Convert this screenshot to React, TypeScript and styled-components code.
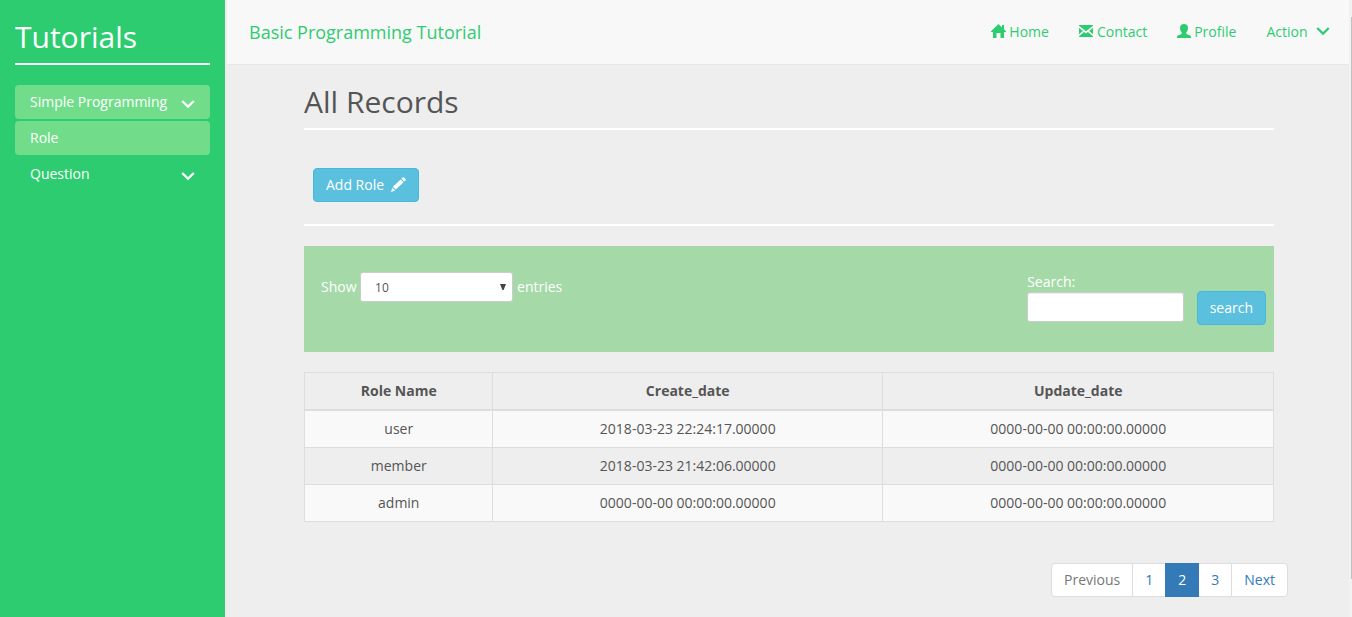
import React from "react";
import styled, { createGlobalStyle } from "styled-components";

const GlobalStyle = createGlobalStyle`
  * { box-sizing: border-box; }
  body {
    margin: 0;
    background: #eee;
    color: #555;
    font: 14px/20px "Open Sans", sans-serif;
    overflow: hidden;
  }
  a { color: inherit; text-decoration: none; }
`;

const Page = styled.div`
  display: flex;
  height: 617px;
`;

const Sidebar = styled.aside`
  width: 225px;
  flex: none;
  padding: 0 15px;
  background: #2ecc71;
  color: #fff;
`;

const Brand = styled.h2`
  margin: 0 0 20px;
  height: 65px;
  padding-top: 20px;
  border-bottom: 2px solid #fff;
  font-size: 30px;
  font-weight: 400;
  line-height: 33px;
`;

const Menu = styled.nav`
  display: flex;
  flex-direction: column;
  gap: 2px;
`;

const MenuItem = styled.a<{ $active?: boolean }>`
  display: flex;
  align-items: center;
  justify-content: space-between;
  height: 34px;
  padding: 0 15px;
  border-radius: 4px;
  background: ${(p) => (p.$active ? "#71dd8a" : "transparent")};

  svg { margin-top: 3px; }
`;

const Main = styled.div`
  flex: 1;
  min-width: 0;
  margin-left: 2px;
`;

const TopBar = styled.header`
  display: flex;
  align-items: center;
  justify-content: space-between;
  height: 65px;
  padding: 0 19.500px 0 22px;
  background: #f8f8f8;
  border-bottom: 1px solid #e7e7e7;
  color: #2ecc71;
`;

const SiteName = styled.a`
  font-size: 18px;
`;

const Links = styled.nav`
  display: flex;
  gap: 30px;
`;

const TopLink = styled.a<{ $gap?: number }>`
  display: flex;
  align-items: center;
  gap: ${(p) => p.$gap ?? 3}px;

  svg { margin-top: -2px; }
`;

const Content = styled.main`
  width: 970px;
  margin-left: 77px;
`;

const PageTitle = styled.h2`
  margin: 0;
  height: 65px;
  padding-top: 20px;
  border-bottom: 2px solid #fff;
  font-size: 30px;
  font-weight: 400;
  line-height: 33px;
`;

const Actions = styled.div`
  height: 96px;
  padding: 38px 9px 0;
  border-bottom: 2px solid #fff;
`;

const Button = styled.button`
  display: inline-flex;
  align-items: center;
  gap: 7px;
  height: 34px;
  padding: 0 12px;
  border: 1px solid #46b8da;
  border-radius: 4px;
  background: #5bc0de;
  color: #fff;
  font: inherit;

  svg { margin-top: -2px; }
`;

const Filters = styled.section`
  display: flex;
  justify-content: space-between;
  height: 106px;
  margin: 20px 0;
  padding: 26px 8px 0 17px;
  background: #a5daa8;
  color: #fff;
`;

const Entries = styled.div`
  display: flex;
  align-items: center;
  gap: 4.500px;
  height: 30px;
`;

const SelectBox = styled.div`
  display: flex;
  align-items: center;
  justify-content: space-between;
  width: 153px;
  height: 30px;
  margin-left: -1.500px;
  padding: 1px 6px 0 14.500px;
  border: 1px solid #ccc;
  border-radius: 3px;
  background: #fff;
  color: #555;
  font-size: 12px;

  svg { margin-top: -2px; }
`;

const SearchForm = styled.div`
  display: flex;
  gap: 13px;

  button { margin-top: 19px; }
`;

const SearchLabel = styled.label`
  display: flex;
  flex-direction: column;
  text-indent: 0.500px;
`;

const SearchInput = styled.input`
  width: 157px;
  height: 30px;
  border: 1px solid #ccc;
  border-radius: 3px;
  background: #fff;
  box-shadow: inset 0 1px 1px rgba(0, 0, 0, 0.075);
`;

const Table = styled.table`
  width: 970px;
  table-layout: fixed;
  border-collapse: collapse;
  text-align: center;

  th, td {
    height: 37px;
    padding: 0 0 0 0.500px;
    border: 1px solid #ddd;
  }
  th { border-bottom-width: 2px; font-weight: 700; }
  tbody tr:first-child td { height: 38px; padding-top: 1px; }
  tbody tr:nth-child(odd) { background: #f9f9f9; }
`;

const Pager = styled.nav`
  display: flex;
  justify-content: flex-end;
  margin: 41px -14px 0 0;
`;

const PageLink = styled.a<{ $kind?: "disabled" | "active" }>`
  height: 34px;
  margin-left: -1px;
  padding: 6px 12px;
  position: relative;
  z-index: ${(p) => (p.$kind === "active" ? 1 : 0)};
  border: 1px solid ${(p) => (p.$kind === "active" ? "#337ab7" : "#ddd")};
  background: ${(p) => (p.$kind === "active" ? "#337ab7" : "#fff")};
  color: ${(p) =>
    p.$kind === "active" ? "#fff" : p.$kind === "disabled" ? "#777" : "#337ab7"};

  &:first-child { border-radius: 4px 0 0 4px; }
  &:last-child { border-radius: 0 4px 4px 0; }
`;

const ScrollTrack = styled.div`
  width: 3px;
  flex: none;
  padding: 17px 0 0 2px;
  background: #f1f1f1;
`;

const ScrollThumb = styled.div`
  height: 562px;
  background: #c1c1c1;
`;

const ChevronDown = () => (
  <svg width="14" height="14" viewBox="0 0 14 14">
    <path d="M1.200 4 7 9.600 12.800 4" fill="none" stroke="currentColor" strokeWidth="2.2" />
  </svg>
);

const HomeIcon = () => (
  <svg width="15" height="14" viewBox="0 0 15 14">
    <path
      d="M7.500 0 11 3.400V1h2v4.300L15 7.300V8h-2v6H9.500V9h-4v5H2V8H0v-.7z"
      fill="currentColor"
    />
  </svg>
);

const EnvelopeIcon = () => (
  <svg width="15" height="14" viewBox="0 0 15 14">
    <path
      d="M0 1h14v.8L7 7.300 0 1.800zM0 3.700 3.900 7 0 10.300zM14 3.700v6.600L10.100 7zM5.100 8 7 9.500 8.900 8 14 12.200v.8H0v-.8z"
      fill="currentColor"
    />
  </svg>
);

const UserIcon = () => (
  <svg width="14" height="14" viewBox="0 0 14 14">
    <path
      d="M7 0C9.400 0 11 1.400 11 3.700c0 1.800-.5 3.500-1.700 4.700v.9c0 .5.2.7.6.9l3.300 1.400c.5.2.8.6.8 1.100V14H0v-1.300c0-.5.3-.9.8-1.100l3.300-1.400c.4-.2.6-.4.6-.9v-.9C3.500 7.200 3 5.500 3 3.700 3 1.400 4.600 0 7 0z"
      fill="currentColor"
    />
  </svg>
);

const PencilIcon = () => (
  <svg width="15" height="15" viewBox="0 0 15 15">
    <path
      d="M11.600.6c.4-.4 1-.4 1.400 0l1.500 1.500c.4.4.4 1 0 1.400l-1.200 1.100-2.900-2.900zM9.700 2.400l2.900 2.900-7.900 7.300-2.800-2.800zM1.300 10.700l2.900 2.900L0 15z"
      fill="currentColor"
    />
  </svg>
);

const SelectArrow = () => (
  <svg width="6" height="6" viewBox="0 0 6 6">
    <path d="M0 0h6L3.600 6H2.400z" fill="#444" />
  </svg>
);

const columns = ["Role Name", "Create_date", "Update_date"];
const rows = [
  ["user", "2018-03-23 22:24:17.00000", "0000-00-00 00:00:00.00000"],
  ["member", "2018-03-23 21:42:06.00000", "0000-00-00 00:00:00.00000"],
  ["admin", "0000-00-00 00:00:00.00000", "0000-00-00 00:00:00.00000"],
];

export default function App() {
  return (
    <>
      <GlobalStyle />
      <Page>
        <Sidebar>
          <Brand>Tutorials</Brand>
          <Menu>
            <MenuItem $active>Simple Programming <ChevronDown /></MenuItem>
            <MenuItem $active>Role</MenuItem>
            <MenuItem>Question <ChevronDown /></MenuItem>
          </Menu>
        </Sidebar>
        <Main>
          <TopBar>
            <SiteName>Basic Programming Tutorial</SiteName>
            <Links>
              <TopLink><HomeIcon />Home</TopLink>
              <TopLink><EnvelopeIcon />Contact</TopLink>
              <TopLink><UserIcon />Profile</TopLink>
              <TopLink $gap={8}>Action<ChevronDown /></TopLink>
            </Links>
          </TopBar>
          <Content>
            <PageTitle>All Records</PageTitle>
            <Actions>
              <Button>Add Role <PencilIcon /></Button>
            </Actions>
            <Filters>
              <Entries>
                Show
                <SelectBox>10<SelectArrow /></SelectBox>
                entries
              </Entries>
              <SearchForm>
                <SearchLabel>Search:<SearchInput /></SearchLabel>
                <Button>search</Button>
              </SearchForm>
            </Filters>
            <Table>
              <colgroup>
                <col style={{ width: 188 }} />
                <col style={{ width: 390 }} />
                <col style={{ width: 391 }} />
              </colgroup>
              <thead>
                <tr>{columns.map((c) => <th key={c}>{c}</th>)}</tr>
              </thead>
              <tbody>
                {rows.map((row) => (
                  <tr key={row[0]}>{row.map((cell, i) => <td key={i}>{cell}</td>)}</tr>
                ))}
              </tbody>
            </Table>
            <Pager>
              <PageLink $kind="disabled">Previous</PageLink>
              <PageLink>1</PageLink>
              <PageLink $kind="active">2</PageLink>
              <PageLink>3</PageLink>
              <PageLink>Next</PageLink>
            </Pager>
          </Content>
        </Main>
        <ScrollTrack><ScrollThumb /></ScrollTrack>
      </Page>
    </>
  );
}
